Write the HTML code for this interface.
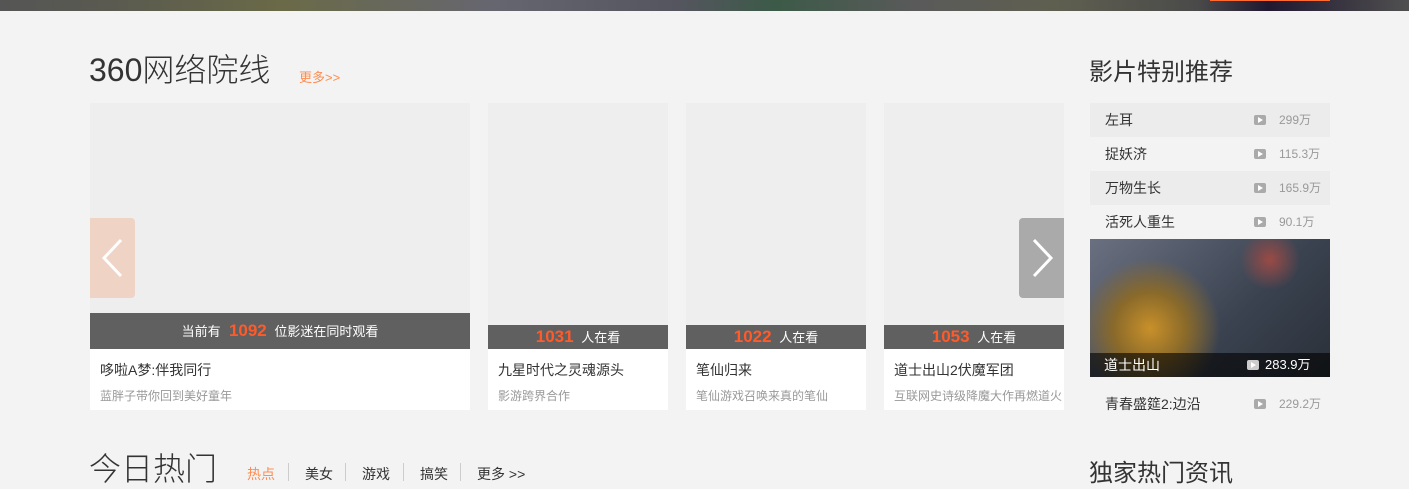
<!DOCTYPE html>
<html><head><meta charset="utf-8"><style>
*{margin:0;padding:0;box-sizing:border-box}
body{width:1409px;height:481px;overflow:hidden;background:#f3f3f3;font-family:"Liberation Sans","Noto Sans CJK SC",sans-serif;position:relative;color:#333}
.a{position:absolute}
.top{left:0;top:0;width:1409px;height:11px;background:linear-gradient(90deg,#555 0,#5a5a50 8%,#6a6a48 20%,#666670 35%,#55555f 48%,#3c5a48 55%,#5a5a5a 65%,#5f5f50 75%,#4a4a4a 85%,#201830 90%,#505050 100%)}
.card{background:#fff;overflow:hidden}
.img{background:#eee}
.bar{background:#606060;color:#fff;text-align:center;font-size:13px}
.bar b{color:#ff5a2a;font-size:17px;margin-right:4px}
.t{font-size:14px;color:#333;position:absolute;left:10px}
.s{font-size:12px;color:#999;position:absolute;left:10px;white-space:nowrap}
.row{position:absolute;left:1090px;width:240px;height:34px;font-size:14px;line-height:34px;padding-left:15px}
.row .n{position:absolute;left:189px;font-size:12px;color:#999}
.pl{position:absolute;left:164px;top:12px;width:12px;height:10px;background:#aaa;border-radius:2px}
.pl:after{content:"";position:absolute;left:4px;top:2px;border-left:5px solid #fff;border-top:3px solid transparent;border-bottom:3px solid transparent}
.tab{position:absolute;top:464px;font-size:14px;color:#333}
.sep{position:absolute;top:463px;width:1px;height:18px;background:#ccc}
</style></head><body>
<div class="a top"></div>
<div class="a" style="left:1210px;top:0;width:120px;height:1px;background:#ff6a30"></div>
<div class="a" style="left:89px;top:50px;font-size:32px;color:#333;line-height:40px;font-weight:300">360网络院线</div>
<div class="a" style="left:299px;top:67px;font-size:13px;color:#ff8c50">更多&gt;&gt;</div>

<div class="a card" style="left:90px;top:103px;width:380px;height:307px">
 <div class="img" style="height:210px"></div>
 <div class="bar" style="height:36px;line-height:36px">当前有 <b>&nbsp;1092</b> 位影迷在同时观看</div>
 <div class="t" style="top:257px">哆啦A梦:伴我同行</div>
 <div class="s" style="top:284px">蓝胖子带你回到美好童年</div>
</div>
<div class="a card" style="left:488px;top:103px;width:180px;height:307px">
 <div class="img" style="height:222px"></div>
 <div class="bar" style="height:24px;line-height:24px"><b>1031</b> 人在看</div>
 <div class="t" style="top:257px">九星时代之灵魂源头</div>
 <div class="s" style="top:284px">影游跨界合作</div>
</div>
<div class="a card" style="left:686px;top:103px;width:180px;height:307px">
 <div class="img" style="height:222px"></div>
 <div class="bar" style="height:24px;line-height:24px"><b>1022</b> 人在看</div>
 <div class="t" style="top:257px">笔仙归来</div>
 <div class="s" style="top:284px">笔仙游戏召唤来真的笔仙</div>
</div>
<div class="a card" style="left:884px;top:103px;width:180px;height:307px">
 <div class="img" style="height:222px"></div>
 <div class="bar" style="height:24px;line-height:24px"><b>1053</b> 人在看</div>
 <div class="t" style="top:257px;white-space:nowrap">道士出山2伏魔军团</div>
 <div class="s" style="top:284px">互联网史诗级降魔大作再燃道火</div>
</div>
<div class="a" style="left:90px;top:218px;width:45px;height:80px;background:#efd3c4;border-radius:0 4px 4px 0">
 <svg width="45" height="80"><path d="M31 22 L14 40 L31 58" stroke="#fff" stroke-width="3" fill="none"/></svg></div>
<div class="a" style="left:1019px;top:218px;width:45px;height:80px;background:#aaa;border-radius:4px 0 0 4px">
 <svg width="45" height="80"><path d="M15 22 L32 40 L15 58" stroke="#fff" stroke-width="3" fill="none"/></svg></div>

<div class="a" style="left:1089px;top:52px;font-size:24px;color:#333">影片特别推荐</div>
<div class="row" style="top:103px;background:#ececec">左耳<i class="pl"></i><span class="n">299万</span></div>
<div class="row" style="top:137px">捉妖济<i class="pl"></i><span class="n">115.3万</span></div>
<div class="row" style="top:171px;background:#ececec">万物生长<i class="pl"></i><span class="n">165.9万</span></div>
<div class="row" style="top:205px">活死人重生<i class="pl"></i><span class="n">90.1万</span></div>
<div class="a" style="left:1090px;top:239px;width:240px;height:138px;background:radial-gradient(circle at 25% 65%,#c9902a 0,#8a6a2a 18%,transparent 35%),radial-gradient(circle at 75% 15%,#9a4a45 0,transparent 14%),linear-gradient(135deg,#6a7080,#3a4250 60%,#2a3038)"></div>
<div class="a" style="left:1090px;top:353px;width:240px;height:24px;background:rgba(0,0,0,.6);color:#fff;font-size:14px;line-height:24px;padding-left:14px">道士出山<i class="pl" style="left:157px;top:7px;background:#ccc"></i><span style="position:absolute;left:175px;font-size:13px">283.9万</span></div>
<div class="row" style="top:387px">青春盛筵2:边沿<i class="pl"></i><span class="n">229.2万</span></div>

<div class="a" style="left:89px;top:449px;font-size:32px;color:#333;line-height:40px;font-weight:300">今日热门</div>
<div class="tab" style="left:247px;color:#ff8c50">热点</div><div class="sep" style="left:288px"></div>
<div class="tab" style="left:305px">美女</div><div class="sep" style="left:345px"></div>
<div class="tab" style="left:362px">游戏</div><div class="sep" style="left:403px"></div>
<div class="tab" style="left:420px">搞笑</div><div class="sep" style="left:460px"></div>
<div class="tab" style="left:477px">更多 &gt;&gt;</div>
<div class="a" style="left:1089px;top:453px;font-size:24px;color:#333">独家热门资讯</div>
</body></html>
